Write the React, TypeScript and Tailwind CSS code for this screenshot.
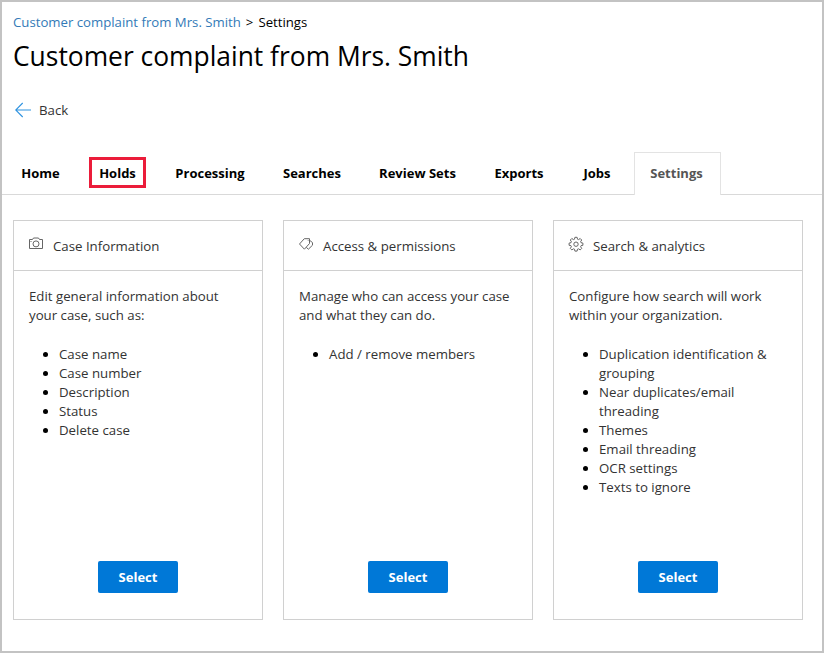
import type { ReactNode } from 'react';

function CameraIcon() {
  return (
    <svg width="16" height="16" viewBox="0 0 16 16" fill="none" stroke="#666" strokeWidth="1">
      <path d="M1.500 3.500h3l1-1.500h5l1 1.500h3v9h-13z" />
      <circle cx="8" cy="7.900" r="3" />
      <path d="M2.500 5.500h1" />
    </svg>
  );
}

function TagIcon() {
  return (
    <svg width="16" height="16" viewBox="0 0 16 16" fill="none" stroke="#666" strokeWidth="1">
      <path d="M1.500 8 6.300 2.700H11.500V7.500L6.400 13.200z" />
      <path d="M11.500 4.200 14.500 6.600V9.200L10.400 13.200 8.300 11.400" />
      <path d="M9.800 4.500h.6" />
    </svg>
  );
}

function GearIcon() {
  return (
    <svg width="16" height="16" viewBox="0 0 16 16" fill="none" stroke="#666" strokeWidth="1" strokeLinejoin="round">
      <path d="M6.900 1.300h2.200l.4 1.900 1 .4 1.700-1.100 1.500 1.500-1.100 1.700.4 1 1.900.4v2.200l-1.900.4-.4 1 1.100 1.700-1.500 1.500-1.700-1.100-1 .4-.4 1.900H6.900l-.4-1.900-1-.4-1.700 1.100-1.500-1.500 1.100-1.700-.4-1-1.900-.4V7.100l1.900-.4.4-1L2.300 4l1.500-1.500 1.700 1.100 1-.4z" />
      <circle cx="8" cy="8.200" r="2.200" />
    </svg>
  );
}

const tabs = [
  { name: 'Home', place: 'ml-[19px] w-[39px]' },
  { name: 'Holds', place: 'ml-[29px] w-[57px] border-3 border-[#eb1c3a]' },
  { name: 'Processing', place: 'ml-[29px] w-[70px]' },
  { name: 'Searches', place: 'ml-[38px] w-[58px]' },
  { name: 'Review Sets', place: 'ml-[37px] w-[79px]' },
  { name: 'Exports', place: 'ml-[36px] w-[52px]' },
  { name: 'Jobs', place: 'ml-[37px] w-[30px]' },
];

type CardProps = { icon: ReactNode; title: string; lines: string[]; items: string[] };

const cards: CardProps[] = [
  {
    icon: <CameraIcon />,
    title: 'Case Information',
    lines: ['Edit general information about', 'your case, such as:'],
    items: ['Case name', 'Case number', 'Description', 'Status', 'Delete case'],
  },
  {
    icon: <TagIcon />,
    title: 'Access & permissions',
    lines: ['Manage who can access your case', 'and what they can do.'],
    items: ['Add / remove members'],
  },
  {
    icon: <GearIcon />,
    title: 'Search & analytics',
    lines: ['Configure how search will work', 'within your organization.'],
    items: [
      'Duplication identification & grouping',
      'Near duplicates/email threading',
      'Themes',
      'Email threading',
      'OCR settings',
      'Texts to ignore',
    ],
  },
];

function Card({ icon, title, lines, items }: CardProps) {
  return (
    <section className="flex h-[400px] w-[250px] flex-col border border-[#d0d0d0]">
      <header className="flex h-[50px] shrink-0 border-b border-[#d0d0d0] pl-[14px]">
        <span className="mt-[15px] w-[25px]">{icon}</span>
        <h2 className="mt-[15px] leading-[20px] whitespace-nowrap">{title}</h2>
      </header>
      <div className="pt-[16px] pl-[15px] leading-[19px] whitespace-nowrap">
        {lines.map((line) => (
          <p key={line}>{line}</p>
        ))}
      </div>
      <ul className="mt-[20px] ml-[45px] w-[180px] list-disc leading-[19px] marker:text-black">
        {items.map((item) => (
          <li key={item}>{item}</li>
        ))}
      </ul>
      <button className="mx-auto mt-auto mb-[26px] h-[32px] w-[80px] rounded-[2px] bg-[#0078d7] pt-[2px] text-[13px] font-bold text-white">
        Select
      </button>
    </section>
  );
}

export default function App() {
  return (
    <main className="flex h-[653px] w-[824px] flex-col border-2 border-[#c3c3c3] bg-white font-['Open_Sans','Noto_Sans',sans-serif] text-[13.25px] text-[#333]">
      <nav className="mt-[10px] ml-[11px] flex h-[20px] gap-[5px] text-[13.2px] leading-[20px] whitespace-nowrap text-black">
        <a className="text-[#337ab7]">Customer complaint from Mrs. Smith</a>
        <span>&gt;</span>
        <span>Settings</span>
      </nav>
      <h1 className="mt-[6px] ml-[11px] h-[36px] text-[26.4px] leading-[36px] whitespace-nowrap text-black">
        Customer complaint from Mrs. Smith
      </h1>
      <div className="mt-[26px] ml-[13px] flex h-[20px] items-center">
        <svg width="16" height="16" viewBox="0 0 16 16" fill="none" stroke="#2f93e0" strokeWidth="1.1">
          <path d="M.7 8H16M7.700 1 .7 8l7 7" />
        </svg>
        <span className="ml-[8px] leading-[20px]">Back</span>
      </div>
      <div className="mt-[32px] flex h-[43px] text-[13px] font-bold text-black">
        <div className="flex w-[632px] border-b border-[#d9d9d9]">
          {tabs.map((tab) => (
            <div key={tab.name} className={`${tab.place} mt-[5px] flex h-[31px] items-center justify-center whitespace-nowrap`}>
              <span className="pt-[2px]">{tab.name}</span>
            </div>
          ))}
        </div>
        <div className="flex h-[43px] w-[87px] items-center justify-center border-x border-t border-[#e3e3e3] bg-white pr-[2px] text-[#555]">
          Settings
        </div>
        <div className="flex-1 border-b border-[#d9d9d9]" />
      </div>
      <div className="mt-[25px] ml-[11px] flex gap-5">
        {cards.map((card) => (
          <Card key={card.title} {...card} />
        ))}
      </div>
    </main>
  );
}
